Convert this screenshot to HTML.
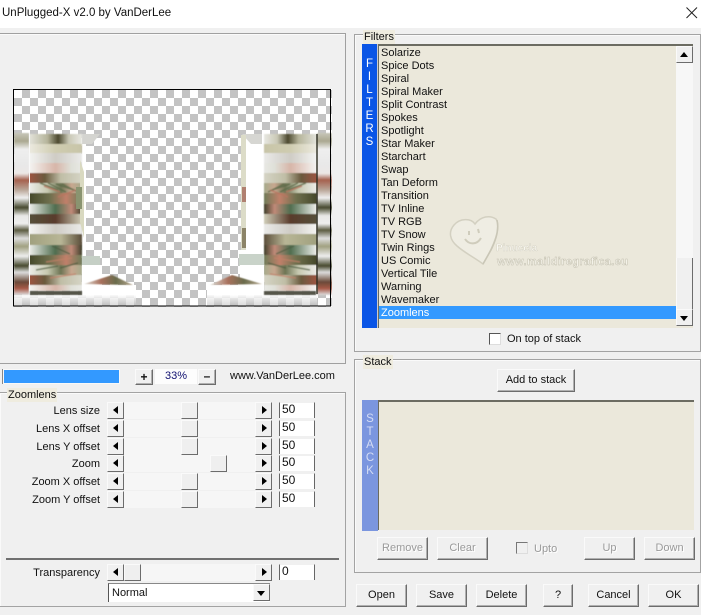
<!DOCTYPE html>
<html><head><meta charset="utf-8">
<style>
html,body{margin:0;padding:0;width:701px;height:615px;overflow:hidden;background:#f0f0f0}
body{position:relative;font-family:"Liberation Sans",sans-serif;font-size:11px;color:#111}
div,span{position:absolute;box-sizing:border-box;white-space:nowrap}
.group{border:1px solid #a3a3a3;box-shadow:inset 1px 1px 0 #fafafa}
.lab{background:#efecdf;height:14px;line-height:14px;padding:0 1px;font-size:11px}
.btn{background:#f0f0f0;border:1px solid;border-color:#fafafa #6c6c6c #6c6c6c #fafafa;box-shadow:inset -1px -1px 0 #b0b0b0;text-align:center;line-height:21px;font-size:11px}
.dis{color:#9a9a9a;text-shadow:1px 1px 0 #fff}
.li{left:381px;height:13px;line-height:15px;font-size:11px}
.tr{left:124px;width:131px;height:17px;background:#f6f6f6}
.sb{width:17px;height:17px;background:#f0f0f0;border:1px solid;border-color:#fafafa #6c6c6c #6c6c6c #fafafa}
.th{width:17px;height:17px;background:#efefef;border:1px solid;border-color:#fafafa #6c6c6c #6c6c6c #fafafa}
.ar{width:0;height:0;border:4px solid transparent}
.l{border-left:0;border-right:5px solid #000;left:5px;top:3px}
.r{border-right:0;border-left:5px solid #000;left:6px;top:3px}
.u{border-top:0;border-bottom:5px solid #000;left:3px;top:5px}
.d{border-bottom:0;border-top:5px solid #000;left:3px;top:6px}
.rl{right:601px;text-align:right;height:16px;line-height:18px;font-size:11px}
.inp{left:279px;width:36px;height:16px;background:#fff;border-left:1px solid #666;border-right:1px solid #666;border-top:1px solid #f0f0f0;padding-left:2px;line-height:12px;font-size:12px}
.vt{color:#fff;font-size:11.5px;line-height:13px;text-align:center;white-space:normal}
</style></head><body>
<div style="left:0;top:0;width:701px;height:28px;background:#fff"></div>
<div style="left:2px;top:5px;font-size:11.500px;line-height:16px">UnPlugged-X v2.0 by VanDerLee</div>
<svg style="position:absolute;left:685px;top:6px" width="14" height="14"><path d="M1.5 1.5L12 12M12 1.5L1.5 12" stroke="#222" stroke-width="1" fill="none"/></svg>

<div style="left:-1px;top:33px;width:347px;height:331px;border:1px solid #a0a0a0;box-shadow:inset 0 1px 0 #fafafa"></div>
<svg style="position:absolute;left:13px;top:89px" width="319" height="218" viewBox="13 89 319 218">
<defs>
<pattern id="ck" x="14" y="90" width="16" height="16" patternUnits="userSpaceOnUse"><rect width="16" height="16" fill="#fff"/><rect x="8" width="8" height="8" fill="#c3c3c3"/><rect y="8" width="8" height="8" fill="#c3c3c3"/></pattern>
<linearGradient id="a"><stop offset="0" stop-color="#e4e4dc"/><stop offset=".35" stop-color="#b5b49a"/><stop offset=".55" stop-color="#4d4a30"/><stop offset=".75" stop-color="#c9c8b5"/><stop offset="1" stop-color="#e8e8e2"/></linearGradient>
<linearGradient id="b"><stop offset="0" stop-color="#eceae0"/><stop offset=".5" stop-color="#cfccb0"/><stop offset="1" stop-color="#c8c5a8"/></linearGradient>
<linearGradient id="c"><stop offset="0" stop-color="#f4f4f2"/><stop offset=".5" stop-color="#cfccc5"/><stop offset="1" stop-color="#eaeae8"/></linearGradient>
<linearGradient id="d"><stop offset="0" stop-color="#f5f5f3"/><stop offset=".5" stop-color="#d7b5a8"/><stop offset=".8" stop-color="#dfe0d8"/><stop offset="1" stop-color="#e8e8e4"/></linearGradient>
<linearGradient id="e"><stop offset="0" stop-color="#9e5442"/><stop offset=".3" stop-color="#6a5a3e"/><stop offset=".6" stop-color="#c0bea6"/><stop offset="1" stop-color="#d5d4c5"/></linearGradient>
<linearGradient id="f"><stop offset="0" stop-color="#ececea"/><stop offset=".35" stop-color="#c7c9b0"/><stop offset=".6" stop-color="#6d7453"/><stop offset=".8" stop-color="#c8a78f"/><stop offset="1" stop-color="#a6ab8c"/></linearGradient>
<linearGradient id="g"><stop offset="0" stop-color="#45482a"/><stop offset=".4" stop-color="#6f704e"/><stop offset=".7" stop-color="#c0806a"/><stop offset="1" stop-color="#6f7a58"/></linearGradient>
<linearGradient id="h"><stop offset="0" stop-color="#f0f0ec"/><stop offset=".5" stop-color="#4f6d4f"/><stop offset=".8" stop-color="#c08a78"/><stop offset="1" stop-color="#40402c"/></linearGradient>
<linearGradient id="i"><stop offset="0" stop-color="#56503a"/><stop offset=".5" stop-color="#5a3c2c"/><stop offset="1" stop-color="#d0cdb8"/></linearGradient>
<linearGradient id="j"><stop offset="0" stop-color="#a0a07e"/><stop offset=".6" stop-color="#b8b696"/><stop offset="1" stop-color="#5c4e3a"/></linearGradient>
<linearGradient id="tri"><stop offset="0" stop-color="#dcdcd4"/><stop offset=".35" stop-color="#a8705c"/><stop offset=".65" stop-color="#6a6c4c"/><stop offset="1" stop-color="#b8a890"/></linearGradient>
<linearGradient id="veil" x1="0" y1="0" x2="0" y2="1"><stop offset="0" stop-color="#fff" stop-opacity=".9"/><stop offset=".6" stop-color="#ddd" stop-opacity=".7"/><stop offset="1" stop-color="#bbb" stop-opacity=".5"/></linearGradient>
<linearGradient id="o" x1="0" y1="0" x2="0" y2="1">
<stop offset="0" stop-color="#c6c6b8"/><stop offset=".05" stop-color="#aaa890"/><stop offset=".1" stop-color="#eee"/><stop offset=".2" stop-color="#e8e8e8"/><stop offset=".25" stop-color="#ece8e6"/><stop offset=".29" stop-color="#a5604e"/><stop offset=".35" stop-color="#b8a496"/><stop offset=".4" stop-color="#f0f0f0"/><stop offset=".46" stop-color="#45482c"/><stop offset=".51" stop-color="#e8e8e6"/><stop offset=".56" stop-color="#eee"/><stop offset=".6" stop-color="#5a5a40"/><stop offset=".65" stop-color="#ddd"/><stop offset=".7" stop-color="#a0a080"/><stop offset=".76" stop-color="#eee"/><stop offset=".82" stop-color="#45482c"/><stop offset=".86" stop-color="#ddd"/><stop offset=".92" stop-color="#6a4a38"/><stop offset=".96" stop-color="#a85a48"/><stop offset="1" stop-color="#ddd"/></linearGradient>
<filter id="bl" x="-5%" y="-5%" width="110%" height="110%"><feGaussianBlur stdDeviation="0.6"/></filter>
<g id="side">
<rect x="14" y="133" width="15" height="162" fill="url(#o)"/>
<rect x="29" y="134" width="53" height="10" fill="url(#a)"/>
<rect x="29" y="144" width="53" height="9" fill="url(#b)"/>
<rect x="29" y="153" width="53" height="10" fill="url(#c)"/>
<rect x="29" y="163" width="53" height="10" fill="url(#d)"/>
<rect x="29" y="173" width="53" height="10" fill="url(#e)"/>
<rect x="29" y="183" width="53" height="10" fill="url(#f)"/>
<rect x="29" y="193" width="53" height="11" fill="url(#g)"/>
<rect x="29" y="204" width="53" height="10" fill="url(#h)"/>
<rect x="29" y="214" width="53" height="10" fill="url(#i)"/>
<rect x="29" y="224" width="53" height="10" fill="url(#c)"/>
<rect x="29" y="234" width="53" height="11" fill="url(#j)"/>
<rect x="29" y="245" width="53" height="10" fill="url(#h)"/>
<rect x="29" y="255" width="53" height="10" fill="url(#g)"/>
<rect x="29" y="265" width="53" height="10" fill="url(#f)"/>
<rect x="29" y="275" width="53" height="10" fill="url(#e)"/>
<rect x="29" y="285" width="53" height="6" fill="url(#d)"/>
<path d="M40 183L58 190M48 183L66 192M56 184L74 190M62 184L78 192" stroke="#5c6a48" stroke-width="1.500" fill="none" opacity=".8"/>
<path d="M44 186L60 192M58 197L76 190" stroke="#b87560" stroke-width="1.500" fill="none" opacity=".8"/>
<path d="M52 246L70 254M60 268L78 263M36 270L58 266" stroke="#4f5c40" stroke-width="1.500" fill="none" opacity=".7"/>
<path d="M46 262L72 258M50 278L76 274" stroke="#c08068" stroke-width="1.500" fill="none" opacity=".7"/>
</g>
</defs>
<rect x="13" y="89" width="319" height="218" fill="url(#ck)"/>
<rect x="14" y="295" width="122" height="11" fill="url(#veil)"/>
<rect x="207" y="295" width="110" height="11" fill="url(#veil)"/>
<rect x="82" y="134" width="4" height="130" fill="#fff"/>
<rect x="246" y="134" width="19" height="130" fill="#fff"/>
<path d="M82 134L100 134L92 144L82 144Z" fill="#d4d4d0"/>
<path d="M242 134L262 134L262 144L251 144Z" fill="#d6d6d2"/>
<g filter="url(#bl)">
<use href="#side"/>
<use href="#side" transform="translate(346 0) scale(-1 1)"/>
</g>
<rect x="29" y="133" width="1" height="162" fill="#f8f8f8"/>
<rect x="316" y="134" width="2" height="160" fill="#2c2c20" opacity=".7"/>
<path d="M80 160L84 172L84 238L80 222Z" fill="#d9d9c0"/>
<rect x="76" y="187" width="6" height="22" fill="#8a9470"/>
<rect x="241" y="135" width="5" height="115" fill="#dcdcc8"/>
<rect x="242" y="187" width="4" height="15" fill="#b08070"/>
<rect x="242" y="228" width="4" height="20" fill="#8c8468"/>
<rect x="82" y="256" width="18" height="9" fill="#c5cfc5"/>
<rect x="239" y="254" width="25" height="12" fill="#c9d3c9"/>
<rect x="82" y="265" width="20" height="30" fill="#fff"/>
<rect x="240" y="265" width="24" height="30" fill="#fff"/>
<rect x="82" y="285" width="54" height="10" fill="#fff"/>
<rect x="207" y="285" width="57" height="10" fill="#fff"/>
<path d="M84 284L112 275L133 285Z" fill="url(#tri)" filter="url(#bl)"/>
<path d="M262 284L232 275L210 285Z" fill="url(#tri)" filter="url(#bl)"/>
<rect x="30" y="291" width="52" height="4" fill="#55554a" filter="url(#bl)"/>
<rect x="264" y="291" width="52" height="4" fill="#55554a" filter="url(#bl)"/>
<rect x="13.500" y="89.500" width="317" height="216.500" fill="none" stroke="#000"/>
</svg>

<div style="left:2px;top:369px;width:118px;height:15px;background:#f8f8f8;border-left:1px solid #888"></div>
<div style="left:4px;top:370px;width:115px;height:13px;background:#3399ff"></div>
<div class="btn" style="left:135px;top:369px;width:18px;height:16px;line-height:14px;font-weight:bold;font-size:12px">+</div>
<div style="left:155px;top:369px;width:42px;height:15px;background:#fdfdfd;text-align:center;line-height:15px;font-size:11px;color:#101070">33%</div>
<div class="btn" style="left:198px;top:369px;width:18px;height:16px;line-height:13px;font-weight:bold;font-size:12px">–</div>
<div style="left:230px;top:369px;height:15px;line-height:15px;font-size:11px">www.VanDerLee.com</div>

<div class="group" style="left:-1px;top:392px;width:347px;height:215px"></div>
<div class="lab" style="left:7px;top:388px">Zoomlens</div>
<div class="rl" style="top:402px">Lens size</div>
<div class="rl" style="top:420px">Lens X offset</div>
<div class="rl" style="top:438px">Lens Y offset</div>
<div class="rl" style="top:455px">Zoom</div>
<div class="rl" style="top:473px">Zoom X offset</div>
<div class="rl" style="top:491px">Zoom Y offset</div>
<div class="rl" style="top:564px">Transparency</div>

<div class="tr" style="top:402px"></div><div class="tr" style="top:420px"></div><div class="tr" style="top:438px"></div><div class="tr" style="top:455px"></div><div class="tr" style="top:473px"></div><div class="tr" style="top:491px"></div><div class="tr" style="top:564px"></div>
<div class="sb" style="left:107px;top:402px"><div class="ar l"></div></div><div class="sb" style="left:255px;top:402px"><div class="ar r"></div></div>
<div class="sb" style="left:107px;top:420px"><div class="ar l"></div></div><div class="sb" style="left:255px;top:420px"><div class="ar r"></div></div>
<div class="sb" style="left:107px;top:438px"><div class="ar l"></div></div><div class="sb" style="left:255px;top:438px"><div class="ar r"></div></div>
<div class="sb" style="left:107px;top:455px"><div class="ar l"></div></div><div class="sb" style="left:255px;top:455px"><div class="ar r"></div></div>
<div class="sb" style="left:107px;top:473px"><div class="ar l"></div></div><div class="sb" style="left:255px;top:473px"><div class="ar r"></div></div>
<div class="sb" style="left:107px;top:491px"><div class="ar l"></div></div><div class="sb" style="left:255px;top:491px"><div class="ar r"></div></div>
<div class="sb" style="left:107px;top:564px"><div class="ar l"></div></div><div class="sb" style="left:255px;top:564px"><div class="ar r"></div></div>
<div class="th" style="left:181px;top:402px"></div><div class="th" style="left:181px;top:420px"></div><div class="th" style="left:181px;top:438px"></div><div class="th" style="left:210px;top:455px"></div><div class="th" style="left:181px;top:473px"></div><div class="th" style="left:181px;top:491px"></div><div class="th" style="left:124px;top:564px"></div>
<div class="inp" style="top:402px">50</div><div class="inp" style="top:420px">50</div><div class="inp" style="top:438px">50</div><div class="inp" style="top:455px">50</div><div class="inp" style="top:473px">50</div><div class="inp" style="top:491px">50</div><div class="inp" style="top:564px">0</div>

<div style="left:6px;top:558px;width:333px;height:2px;background:#707070"></div>
<div style="left:108px;top:583px;width:162px;height:19px;background:#fff;border-left:1px solid #555;border-top:1px solid #888;padding-left:3px;line-height:18px;font-size:11px">Normal</div>
<div class="sb" style="left:253px;top:584px"><div class="ar d"></div></div>

<div class="group" style="left:354px;top:34px;width:347px;height:318px"></div>
<div class="lab" style="left:363px;top:30px">Filters</div>
<div style="left:362px;top:44px;width:15px;height:284px;background:#0a55e6"></div>
<div style="left:377px;top:44px;width:1px;height:284px;background:#ccc"></div>
<div style="left:378px;top:44px;width:315px;height:284px;background:#ebe8db;border-left:1px solid #6b6b60;border-top:2px solid #6c6c62"></div>
<div class="vt" style="left:362px;top:58px;width:15px">F<br>I<br>L<br>T<br>E<br>R<br>S</div>
<div style="left:676px;top:46px;width:17px;height:280px;background:#f7f7f7"></div>
<div class="sb" style="left:676px;top:46px"><div class="ar u"></div></div>
<div style="left:676px;top:258px;width:17px;height:51px;background:#f0f0f0;border-right:1px solid #6c6c6c;border-left:1px solid #fafafa"></div>
<div class="sb" style="left:676px;top:309px"><div class="ar d"></div></div>

<div class="li" style="top:46px">Solarize</div>
<div class="li" style="top:59px">Spice Dots</div>
<div class="li" style="top:72px">Spiral</div>
<div class="li" style="top:85px">Spiral Maker</div>
<div class="li" style="top:98px">Split Contrast</div>
<div class="li" style="top:111px">Spokes</div>
<div class="li" style="top:124px">Spotlight</div>
<div class="li" style="top:137px">Star Maker</div>
<div class="li" style="top:150px">Starchart</div>
<div class="li" style="top:163px">Swap</div>
<div class="li" style="top:176px">Tan Deform</div>
<div class="li" style="top:189px">Transition</div>
<div class="li" style="top:202px">TV Inline</div>
<div class="li" style="top:215px">TV RGB</div>
<div class="li" style="top:228px">TV Snow</div>
<div class="li" style="top:241px">Twin Rings</div>
<div class="li" style="top:254px">US Comic</div>
<div class="li" style="top:267px">Vertical Tile</div>
<div class="li" style="top:280px">Warning</div>
<div class="li" style="top:293px">Wavemaker</div>
<div style="left:379px;top:306px;width:297px;height:13px;background:#3399ff"></div>
<div class="li" style="top:306px;color:#fff">Zoomlens</div>

<svg style="position:absolute;left:445px;top:212px" width="190" height="60">
<path d="M51 7C45 3 36 4 30 12C26 6 15 6 9 13C3 20 5 28 12 34C20 41 30 46 38 52C44 42 50 30 52 21C53 15 53 10 51 7Z" fill="#efede3" stroke="#d3d0c1" stroke-width="1.500"/>
<path d="M52 8C54 16 52 26 46 38L38 52" fill="none" stroke="#c9c6b6" stroke-width="1.500"/>
<path d="M20 27C24 33 32 33 36 26" fill="none" stroke="#cfccbc" stroke-width="2"/>
<path d="M24 19l0 4M33 17l1 4" stroke="#cfccbc" stroke-width="2"/>
<text x="51" y="39" font-family="Liberation Sans" font-size="10" font-weight="bold" fill="#faf9f3" stroke="#c7c4b4" stroke-width=".3">Pinuccia</text>
<text x="52" y="53" font-family="Liberation Sans" font-size="11" font-weight="bold" fill="#f4f2e9" stroke="#bdbaa9" stroke-width=".4" textLength="131">www.maildiregrafica.eu</text>
</svg>

<div style="left:489px;top:333px;width:12px;height:12px;background:#fff;border:1px solid;border-color:#555 #ddd #ddd #555"></div>
<div style="left:507px;top:332px;height:15px;line-height:15px;font-size:11px">On top of stack</div>

<div class="group" style="left:354px;top:359px;width:347px;height:214px"></div>
<div class="lab" style="left:363px;top:355px">Stack</div>
<div class="btn" style="left:497px;top:369px;width:78px;height:23px">Add to stack</div>
<div style="left:362px;top:400px;width:16px;height:131px;background:#7b96df"></div>
<div style="left:378px;top:400px;width:316px;height:130px;background:#ebe8db;border-left:1px solid #6b6b60;border-top:2px solid #6c6c62"></div>
<div class="vt" style="left:362px;top:413px;width:16px;color:#d4dcf4">S<br>T<br>A<br>C<br>K</div>

<div class="btn dis" style="left:377px;top:537px;width:51px;height:23px">Remove</div>
<div class="btn dis" style="left:437px;top:537px;width:51px;height:23px">Clear</div>
<div style="left:516px;top:542px;width:12px;height:12px;border:1px solid;border-color:#777 #ddd #ddd #777;background:#f0f0f0"></div>
<div class="dis" style="left:534px;top:541px;line-height:16px">Upto</div>
<div class="btn dis" style="left:584px;top:537px;width:51px;height:23px">Up</div>
<div class="btn dis" style="left:644px;top:537px;width:51px;height:23px">Down</div>

<div class="btn" style="left:356px;top:584px;width:51px;height:23px">Open</div>
<div class="btn" style="left:416px;top:584px;width:51px;height:23px">Save</div>
<div class="btn" style="left:476px;top:584px;width:51px;height:23px">Delete</div>
<div class="btn" style="left:543px;top:584px;width:30px;height:23px">?</div>
<div class="btn" style="left:588px;top:584px;width:51px;height:23px">Cancel</div>
<div class="btn" style="left:648px;top:584px;width:51px;height:23px">OK</div>
</body></html>
